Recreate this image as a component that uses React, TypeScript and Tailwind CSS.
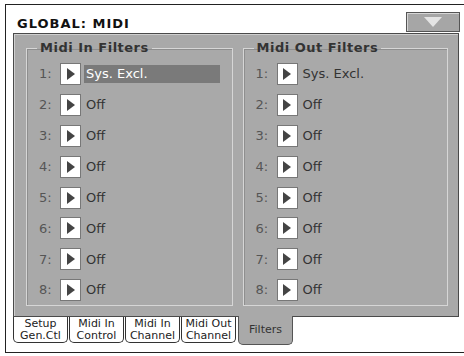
import type { ReactNode } from "react";

const FONT = "font-['DejaVu_Sans',sans-serif]";

type Row = { n: number; value: string; selected?: boolean };

const inRows: Row[] = [
  { n: 1, value: "Sys. Excl.", selected: true },
  ...[2, 3, 4, 5, 6, 7, 8].map((n) => ({ n, value: "Off" })),
];
const outRows: Row[] = [
  { n: 1, value: "Sys. Excl." },
  ...[2, 3, 4, 5, 6, 7, 8].map((n) => ({ n, value: "Off" })),
];

const tabs = [
  ["Setup", "Gen.Ctl"],
  ["Midi In", "Control"],
  ["Midi In", "Channel"],
  ["Midi Out", "Channel"],
];

export default function App() {
  return (
    <div className={`h-[356px] w-[464px] overflow-hidden bg-white ${FONT}`}>
      <div className="ml-[5px] mt-[4px] h-[349px] border-y border-l border-[#222]">
        {/* title bar */}
        <div className="flex h-[28px] items-end justify-between pb-[1px] pl-[11px] pr-[4px]">
          <span className="mb-[1px] text-[13px] font-bold leading-[15px] tracking-[1px] text-[#111]">GLOBAL: MIDI</span>
          <button
            type="button"
            className="flex h-[20px] w-[54px] items-center justify-center border border-[#555] bg-[#a6a6a6] shadow-[inset_1px_1px_0_#d6d6d6]"
          >
            <svg width="18" height="10" viewBox="0 0 18 10" aria-hidden>
              <path d="M0 0h18L9 10z" fill="#e4e4e4" />
            </svg>
          </button>
        </div>

        {/* main panel */}
        <div className="ml-[7px] flex h-[284px] w-[446px] gap-[10px] border border-[#4a4a4a] bg-[#a9a9a9] pb-[10px] pl-[12px] pr-[10px] pt-[7px] shadow-[inset_1px_1px_0_#cfcfcf]">
          <Group title="Midi In Filters" width="w-[207px]">
            {inRows.map((r) => (
              <FilterRow key={r.n} row={r} />
            ))}
          </Group>
          <Group title="Midi Out Filters" width="w-[206px]">
            {outRows.map((r) => (
              <FilterRow key={r.n} row={r} />
            ))}
          </Group>
        </div>

        {/* tabs */}
        <div className="ml-[7px] flex gap-[1px]">
          {tabs.map(([a, b]) => (
            <div
              key={a + b}
              className="flex h-[26px] w-[55px] flex-col items-center justify-center rounded-b-[5px] border-x border-b border-[#333] bg-white text-[11px] leading-[12px] text-[#222]"
            >
              <span>{a}</span>
              <span>{b}</span>
            </div>
          ))}
          <div className="relative -mt-px ml-[1px] flex h-[29px] w-[55px] items-center justify-center rounded-b-[5px] border-x border-b border-[#555] bg-[#a9a9a9] text-[11px] text-[#333]">
            Filters
          </div>
        </div>
      </div>
    </div>
  );
}

function Group({ title, width, children }: { title: string; width: string; children: ReactNode }) {
  return (
    <fieldset className={`${width} h-[265px] border border-[#d6d6d6] shadow-[inset_1px_1px_0_#8e8e8e] pl-[12px] pt-[8px]`}>
      <legend className="-ml-[2px] px-[3px] text-[13px] font-bold leading-[14px] tracking-[0.5px] text-[#333]">
        {title}
      </legend>
      <div className="flex flex-col gap-[8.9px]">{children}</div>
    </fieldset>
  );
}

function FilterRow({ row }: { row: Row }) {
  return (
    <div className="flex h-[22px] items-center text-[13px]">
      <span className="w-[21px] text-[#555]">{row.n}:</span>
      <span className="flex h-[22px] w-[21px] items-center justify-center border border-[#777] bg-white">
        <svg width="8" height="12" viewBox="0 0 8 12" aria-hidden>
          <path d="M0 0l8 6-8 6z" fill="#444" />
        </svg>
      </span>
      <span
        className={
          row.selected
            ? "ml-[3px] flex h-[18px] w-[136px] items-center bg-[#7a7a7a] px-[2px] text-white"
            : "ml-[3px] px-[2px] text-[#333]"
        }
      >
        {row.value}
      </span>
    </div>
  );
}
